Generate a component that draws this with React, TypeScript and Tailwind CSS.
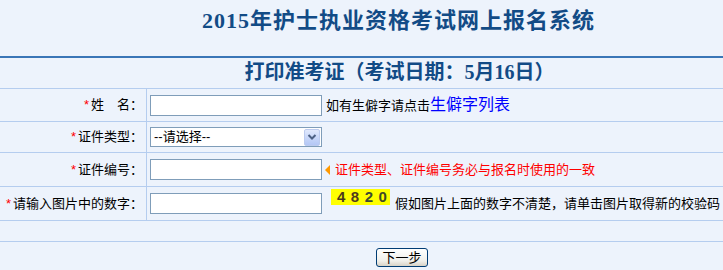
import React from 'react';

const sans = "[font-family:'Liberation_Sans','Noto_Sans_CJK_SC',sans-serif]";

const Label: React.FC<{ text: string }> = ({ text }) => (
  <div className="w-[147px] h-full shrink-0 border-r border-[#b5cdef] flex items-center justify-end pr-[3px]">
    <span className="text-[#ff0000] mr-[2px]">*</span>
    <span>{text}</span>
  </div>
);

const TextBox: React.FC = () => (
  <input
    type="text"
    className="w-[172px] h-[21px] border border-[#7f9db9] bg-white outline-none shrink-0"
  />
);

const App: React.FC = () => {
  return (
    <div className={`w-[723px] h-[270px] overflow-hidden bg-[#edf3fc] text-[13px] text-black ${sans}`}>
      {/* Title */}
      <div className="h-[56px] pt-[10px] pl-[74px] text-center">
        <h1 className="text-[22px] leading-[22px] font-bold tracking-[1px] text-[#124b86] [font-family:'Liberation_Serif','Noto_Sans_CJK_SC',serif]">
          2015年护士执业资格考试网上报名系统
        </h1>
      </div>
      <div className="h-[2px] bg-[#3a76b7]" />

      {/* Sub title */}
      <div className="h-[31px] border-b border-[#b5cdef] flex items-center justify-center pl-[76px] pb-[2px]">
        <h2 className="text-[20px] leading-[20px] font-bold text-[#124b86] [font-family:'Liberation_Serif','Noto_Sans_CJK_SC',serif]">
          打印准考证（考试日期：5月16日）
        </h2>
      </div>

      {/* Name */}
      <div className="h-[33px] border-b border-[#b5cdef] flex items-center">
        <Label text="姓　名：" />
        <div className="flex items-center pl-[3px]">
          <TextBox />
          <span className="ml-[4px] flex items-baseline">
            如有生僻字请点击
            <a className="text-[16px] text-[#0000ff] cursor-pointer">生僻字列表</a>
          </span>
        </div>
      </div>

      {/* ID type */}
      <div className="h-[31px] border-b border-[#b5cdef] flex items-center">
        <Label text="证件类型：" />
        <div className="flex items-center pl-[3px]">
          <div className="w-[172px] h-[20px] border border-[#7f9db9] bg-white flex items-center">
            <span className="flex-1 pl-[3px] leading-[18px]">--请选择--</span>
            <div className="w-[16px] h-[17px] mr-[1px] rounded-[2px] border border-[#bccbef] bg-[linear-gradient(180deg,#e1e9fd,#c4d4f8_60%,#b4c7f5)] flex items-center justify-center">
              <svg width="10" height="8" viewBox="0 0 10 8">
                <path d="M1.5 2 L5 5.5 L8.5 2" fill="none" stroke="#4d6185" strokeWidth="2" />
              </svg>
            </div>
          </div>
        </div>
      </div>

      {/* ID number */}
      <div className="h-[34px] border-b border-[#b5cdef] flex items-center">
        <Label text="证件编号：" />
        <div className="flex items-center pl-[3px]">
          <TextBox />
          <svg className="ml-[3px]" width="5" height="10" viewBox="0 0 5 10">
            <polygon points="5,0 0,5 5,10" fill="#ff9900" />
          </svg>
          <span className="ml-[5px] text-[#ff0000]">证件类型、证件编号务必与报名时使用的一致</span>
        </div>
      </div>

      {/* Captcha */}
      <div className="h-[34px] border-b border-[#b5cdef] flex items-center">
        <Label text="请输入图片中的数字：" />
        <div className="h-full flex items-center pl-[3px]">
          <TextBox />
          <div className="self-start mt-[2px] ml-[9px] w-[59px] h-[16px] bg-[#ffff00] flex items-center gap-[5.5px] pl-[6px] text-[15px] leading-[16px] font-bold [font-family:'Liberation_Sans',sans-serif] cursor-pointer">
            <span className="text-[#4a3a1c]">4</span>
            <span className="text-[#503c1e]">8</span>
            <span className="text-[#3d4a34]">2</span>
            <span className="text-[#3f4a26]">0</span>
          </div>
          <span className="ml-[5px]">假如图片上面的数字不清楚，请单击图片取得新的校验码</span>
        </div>
      </div>

      {/* Spacer row */}
      <div className="h-[21px] border-b border-[#b5cdef]" />

      {/* Submit */}
      <div className="flex justify-center pl-[81px] pt-[6px]">
        <button className="w-[52px] h-[19px] rounded-[3px] border border-[#003c74] bg-[linear-gradient(180deg,#ffffff,#f0efea_70%,#d8d2c6)] text-[13px] leading-[15px] text-black">
          下一步
        </button>
      </div>
    </div>
  );
};

export default App;
